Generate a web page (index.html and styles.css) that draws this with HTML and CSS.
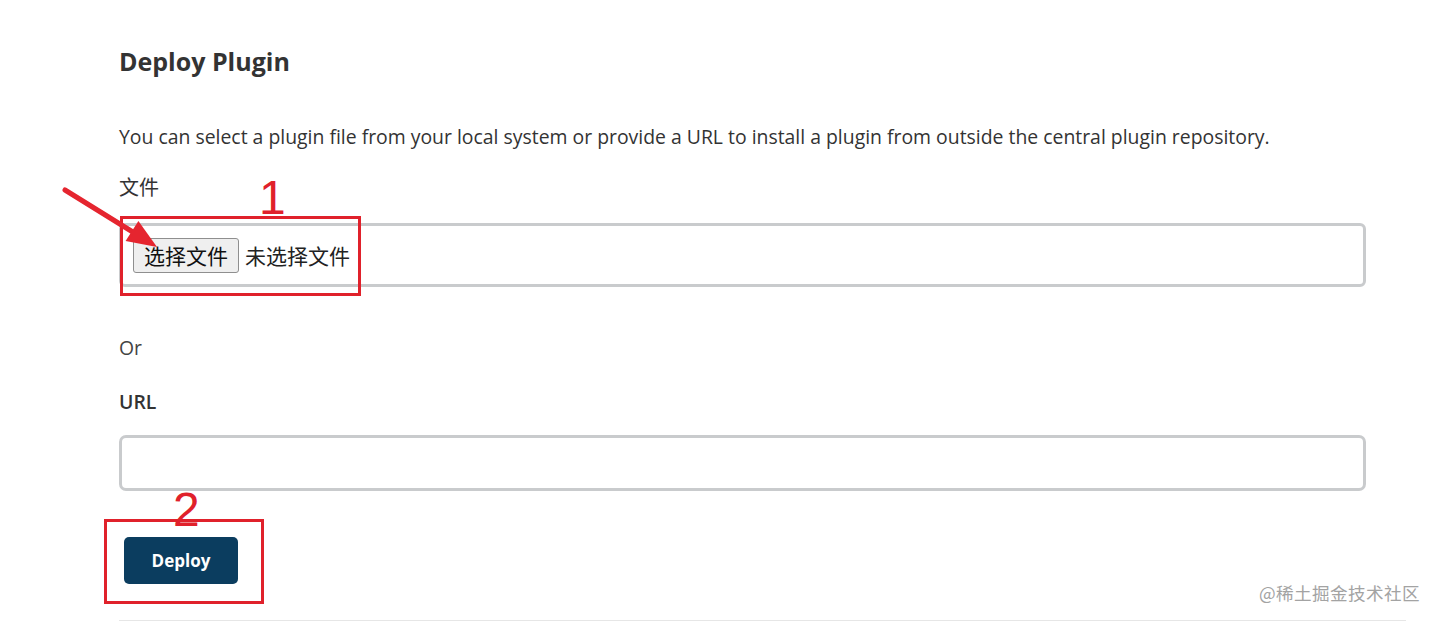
FILE: index.html
```html
<!DOCTYPE html>
<html lang="zh">
<head>
<meta charset="utf-8">
<title>Deploy Plugin</title>
<link rel="stylesheet" href="styles.css">
</head>
<body>
<main class="page">
  <h2 class="title">Deploy Plugin</h2>
  <p class="desc">You can select a plugin file from your local system or provide a URL to install a plugin from outside the central plugin repository.</p>
  <div class="field">
    <div class="label cjk">文件</div>
    <div class="file-box">
      <span class="file-btn">选择文件</span>
      <span class="file-none">未选择文件</span>
    </div>
  </div>
  <div class="or">Or</div>
  <div class="field">
    <div class="label strong">URL</div>
    <div class="url-box"></div>
  </div>
  <div class="actions">
    <button class="deploy">Deploy</button>
  </div>
  <div class="rule"></div>

  <div class="mark mark-1"></div>
  <div class="num num-1">1</div>
  <div class="mark mark-2"></div>
  <div class="num num-2">2</div>
  <svg class="arrow" width="110" height="70" viewBox="0 0 110 70">
    <line x1="3" y1="4" x2="74" y2="48" stroke="#e5252f" stroke-width="5" stroke-linecap="round"/>
    <polygon points="95,61 63.6,55 76.4,35" fill="#e5252f"/>
  </svg>
  <div class="watermark">@稀土掘金技术社区</div>
</main>
</body>
</html>
```
FILE: styles.css
```css
* { box-sizing: border-box; }
html, body { margin: 0; padding: 0; background: #fff; }
body {
  font-family: "Open Sans", "Noto Sans CJK SC", sans-serif;
  color: #333;
  width: 1439px;
  height: 622px;
  overflow: hidden;
}
.page {
  position: relative;
  padding: 46px 0 0 119px;
  width: 1439px;
  height: 622px;
}
.title {
  margin: 0;
  font-size: 25px;
  font-weight: 700;
  line-height: 30px;
  color: #333;
}
.desc {
  margin: 48px 0 0;
  font-size: 19.4px;
  line-height: 26px;
  color: #333;
  white-space: nowrap;
}
.field { width: 1247px; }
.label {
  margin-top: 24px;
  font-size: 19.4px;
  line-height: 26px;
}
.label.cjk {
  font-family: "Noto Sans CJK SC", "Open Sans", sans-serif;
  font-size: 20px;
}
.label.strong {
  margin-top: 28px;
  font-weight: 600;
}
.file-box {
  margin-top: 23px;
  height: 64px;
  border: 3px solid #c9cbcd;
  border-radius: 6px;
  display: flex;
  align-items: center;
  padding-left: 11px;
  gap: 6px;
}
.file-btn {
  font-family: "Noto Sans CJK SC", sans-serif;
  font-size: 21px;
  line-height: 24px;
  padding: 0 10px;
  border: 1px solid #8f8f8f;
  border-radius: 3px;
  background: #efefef;
  color: #111;
  height: 35px;
  display: flex;
  align-items: center;
}
.file-none {
  font-family: "Noto Sans CJK SC", sans-serif;
  font-size: 21px;
  color: #222;
}
.or {
  margin-top: 48px;
  font-size: 19.4px;
  line-height: 26px;
  color: #444;
}
.url-box {
  margin-top: 20px;
  height: 56px;
  border: 3px solid #c9cbcd;
  border-radius: 7px;
}
.actions { padding: 46px 0 0 5px; }
.deploy {
  display: block;
  width: 114px;
  height: 47px;
  border: none;
  border-radius: 5px;
  background: #0b3d5f;
  color: #fff;
  font-family: "Open Sans", sans-serif;
  font-weight: 700;
  font-size: 17px;
  cursor: pointer;
}
.rule {
  margin-top: 36px;
  width: 1287px;
  height: 1px;
  background: #e6e6e6;
}
.mark {
  position: absolute;
  border: 3px solid #e0212b;
}
.mark-1 { left: 120px; top: 216px; width: 241px; height: 80px; }
.mark-2 { left: 104px; top: 519px; width: 160px; height: 85px; }
.num {
  position: absolute;
  font-family: "Liberation Sans", sans-serif;
  color: #e0212b;
  font-size: 48px;
  line-height: 48px;
}
.num-1 { left: 259px; top: 174px; }
.num-2 { left: 173px; top: 486px; }
.arrow { position: absolute; left: 62px; top: 186px; }
.watermark {
  position: absolute;
  left: 1259px;
  top: 580px;
  font-family: "Noto Sans CJK SC", sans-serif;
  font-size: 17.6px;
  color: #a3a3a3;
  letter-spacing: 0.4px;
}
```
